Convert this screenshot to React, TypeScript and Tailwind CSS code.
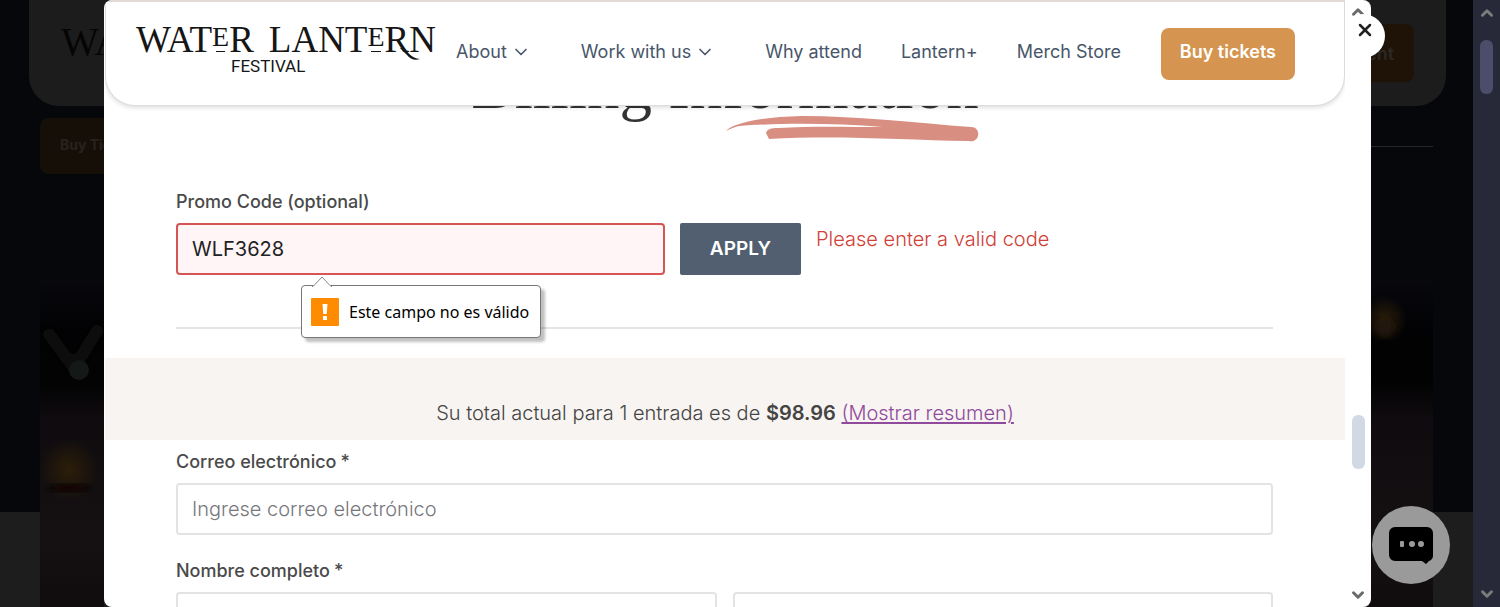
import { ChevronDown, ChevronUp, X } from "lucide-react";

interface NavItem {
	label: string;
	hasMenu?: boolean;
}

const NAV_ITEMS: NavItem[] = [
	{ label: "About", hasMenu: true },
	{ label: "Work with us", hasMenu: true },
	{ label: "Why attend" },
	{ label: "Lantern+" },
	{ label: "Merch Store" },
];

const labelClass = "block text-[18px] leading-6 font-medium text-[#4a4a4a]";
const inputClass =
	"block h-[52px] w-full rounded border-2 border-[#e3e3e5] bg-white px-[14px] text-[20px] text-[#222] outline-none placeholder:text-[#77777c] placeholder:font-light";

function Logo() {
	return (
		<a href="#home" className="mb-3 block w-[300px] shrink-0 text-[#161616]">
			<span className="relative flex items-start justify-between whitespace-nowrap font-['Liberation_Serif',serif] text-[37px] leading-9">
				<span className="flex items-start">
					WAT<SmallE />R
				</span>
				<span className="flex items-start">
					LANT<SmallE />RN
				</span>
				{/* Tail of the R, swung under the last letter */}
				<svg
					className="absolute right-[16px] top-[26px] h-[13px] w-[20px]"
					viewBox="0 0 20 13"
					fill="none"
				>
					<path
						d="M0 0h4c4 4 7 10 16 11-5 2-10 0-13-4z"
						fill="currentColor"
					/>
				</svg>
			</span>
			<span className="block pl-[95px] font-[Roboto,sans-serif] text-[17px] leading-4">
				FESTIVAL
			</span>
		</a>
	);
}

/** Raised E with a short bar underneath */
function SmallE() {
	return (
		<span className="relative inline-block text-[28px] leading-[30px]">
			E
			<span className="absolute inset-x-1 bottom-0 border-b border-current" />
		</span>
	);
}

/** Dimmed page that stays visible around the dialog */
function Backdrop() {
	return (
		<div className="absolute inset-0 flex flex-col bg-[#06070b]">
			<div className="mr-[27px] ml-[29px] flex h-[106px] shrink-0 items-start justify-between rounded-b-[30px] bg-[#1c1c1c] px-8 pt-6">
				<span className="font-['Liberation_Serif',serif] text-[40px] leading-9 text-[#050505]">
					WA
				</span>
				<span className="flex h-[58px] w-[134px] items-center justify-end rounded-lg bg-[#1f1308] pr-5 text-[18px] font-semibold text-[#2b2825]">
					Event
				</span>
			</div>
			<div className="mx-10 mt-3 flex shrink-0 items-center justify-between">
				<span className="flex h-14 w-[160px] items-center rounded-lg bg-[#160f08] px-5 pb-1 text-[14px] font-bold text-[#28221d]">
					Buy Tickets
				</span>
				<span className="h-px w-[200px] bg-[#27272a]" />
			</div>
			<div className="relative mt-[106px] flex-1">
				<div className="absolute inset-x-0 bottom-0 h-[95px] bg-[#1d1d1d]" />
				<svg
					className="absolute left-10 top-0 h-full w-16"
					viewBox="0 0 64 327"
					preserveAspectRatio="none"
				>
					<defs>
						<linearGradient id="water" x1="0" y1="0" x2="0" y2="1">
							<stop offset="0" stopColor="#08080d" />
							<stop offset="0.15" stopColor="#020204" />
							<stop offset="0.32" stopColor="#030304" />
							<stop offset="0.42" stopColor="#0f0b0e" />
							<stop offset="0.8" stopColor="#151113" />
							<stop offset="1" stopColor="#100b0c" />
						</linearGradient>
						<radialGradient id="glow">
							<stop offset="0" stopColor="#2c1e08" />
							<stop offset="1" stopColor="#2c1e08" stopOpacity="0" />
						</radialGradient>
						<filter id="soft">
							<feGaussianBlur stdDeviation="3" />
						</filter>
					</defs>
					<rect width="64" height="327" fill="url(#water)" />
					<path
						d="M6 50l28 38 26-42"
						stroke="#0c100f"
						strokeWidth="12"
						fill="none"
						filter="url(#soft)"
					/>
					<circle cx="39" cy="90" r="10" fill="#141816" />
					<ellipse cx="29" cy="190" rx="30" ry="32" fill="url(#glow)" />
					<ellipse cx="29" cy="208" rx="22" ry="4" fill="#080505" filter="url(#soft)" />
				</svg>
				<svg
					className="absolute right-10 top-0 h-full w-16"
					viewBox="0 0 64 327"
					preserveAspectRatio="none"
				>
					<rect width="64" height="327" fill="url(#water)" />
					<ellipse cx="16" cy="40" rx="22" ry="24" fill="url(#glow)" />
					<circle cx="16" cy="47" r="9" fill="#21170e" filter="url(#soft)" />
					<rect y="60" width="64" height="42" fill="#020202" />
				</svg>
			</div>
		</div>
	);
}

function SiteHeader() {
	return (
		<header className="relative z-10 flex h-[106px] items-center gap-5 rounded-b-[30px] border border-t-2 border-[#dcdcdc] border-t-[#e2d9d4] bg-white pl-[30px] shadow-[0_2px_4px_rgba(0,0,0,0.12)]">
			<Logo />
			<nav className="flex items-center gap-[39px] pb-1 whitespace-nowrap">
				{NAV_ITEMS.map((item) =>
					item.hasMenu ? (
						<button
							key={item.label}
							type="button"
							className="flex items-center gap-1 pr-[11px] text-[18px] leading-6 text-[#48566a]"
						>
							{item.label}
							<ChevronDown className="h-5 w-5" strokeWidth={2} />
						</button>
					) : (
						<a
							key={item.label}
							href="#"
							className="text-[18px] leading-6 text-[#48566a]"
						>
							{item.label}
						</a>
					)
				)}
			</nav>
			<button
				type="button"
				className="ml-5 h-[52px] w-[134px] shrink-0 rounded-lg bg-[#d59550] pb-1 text-[18px] font-semibold whitespace-nowrap text-white"
			>
				Buy tickets
			</button>
		</header>
	);
}

/** Browser style validation bubble, hangs under the field it belongs to */
function ValidationBubble({ text }: { text: string }) {
	return (
		<div
			role="alert"
			className="absolute left-[125px] top-[62px] z-10 flex h-[53px] w-[240px] items-center gap-[10px] rounded border border-[#767676] bg-white pl-[9px] shadow-[4px_4px_3px_rgba(0,0,0,0.25)]"
		>
			<svg
				className="absolute -top-[10px] left-[10px] h-[11px] w-[20px]"
				viewBox="0 0 20 11"
			>
				<path d="M0 11L10 1l10 10z" fill="#fff" />
				<path d="M0 10.500h1L10 1l9 9.500h1" fill="none" stroke="#888" />
			</svg>
			<svg className="h-7 w-7 shrink-0" viewBox="0 0 28 28">
				<rect width="28" height="28" rx="1" fill="#ff8c00" />
				<path d="M11.500 6h5l-.8 10h-3.400z" fill="#fff" />
				<rect x="12" y="18" width="4" height="4" fill="#fff" />
			</svg>
			<span className="font-['Noto_Sans',sans-serif] text-[16px] whitespace-nowrap text-black">
				{text}
			</span>
		</div>
	);
}

function BillingForm() {
	return (
		<main>
			<h1 className="-mt-[52px] text-center font-['Liberation_Serif',serif] text-[65px] leading-[64px] text-[#333]">
				Billing{" "}
				<span className="relative">
					Information
					<svg
						className="absolute -bottom-[22px] right-0 h-[30px] w-[254px]"
						viewBox="0 0 254 30"
					>
						<path
							d="M1 17C8 9 36 3 76 2c60 0 115 7 170 11 6 0 8 5 7 9-1 4-5 6-9 5-66-1-130-6-200-2l-3-6c1-4 5-5 12-5 32-2 70-1 105-1-50-4-105-4-144-1C9 13 5 15 1 17z"
							fill="#d98e82"
						/>
					</svg>
				</span>
			</h1>

			<form onSubmit={(e) => e.preventDefault()}>
				<div className="mt-[72px] pr-[72px] pl-[71px]">
					<label htmlFor="promo" className={labelClass}>
						Promo Code (optional)
					</label>
					<div className="mt-[9px] flex gap-[15px]">
						<div className="relative w-[489px]">
							<input
								id="promo"
								type="text"
								defaultValue="WLF3628"
								aria-invalid="true"
								className="block h-[52px] w-full rounded border-2 border-[#d65454] bg-[#fff5f6] px-[14px] text-[20px] text-[#222] outline-none"
							/>
							<ValidationBubble text="Este campo no es válido" />
						</div>
						<button
							type="button"
							className="h-[52px] w-[121px] shrink-0 rounded-xs bg-[#515f70] text-[19px] font-semibold text-white"
						>
							APPLY
						</button>
						<p className="pt-1 text-[20px] leading-6 font-light text-[#cf4036]">
							Please enter a valid code
						</p>
					</div>
					<hr className="mt-[52px] border-t-2 border-[#e4e4e4]" />
				</div>

				<p className="mt-[29px] bg-[#f8f4f1] pt-[43px] pb-[15px] text-center text-[20px] leading-6 font-light text-[#444]">
					Su total actual para 1 entrada es de{" "}
					<strong className="font-semibold">$98.96</strong>{" "}
					<a
						href="#resumen"
						className="text-[#8f4a9c] underline decoration-2 underline-offset-2"
					>
						(Mostrar resumen)
					</a>
				</p>

				<div className="pt-[10px] pr-[72px] pl-[71px]">
					<label htmlFor="email" className={labelClass}>
						Correo electrónico<span className="ml-1">*</span>
					</label>
					<input
						id="email"
						type="email"
						placeholder="Ingrese correo electrónico"
						className={`${inputClass} mt-[9px]`}
					/>
					<label htmlFor="first-name" className={`${labelClass} mt-6`}>
						Nombre completo<span className="ml-1">*</span>
					</label>
					<div className="mt-[9px] grid grid-cols-2 gap-4">
						<input id="first-name" type="text" className={inputClass} />
						<input
							type="text"
							aria-label="Apellido"
							className={inputClass}
						/>
					</div>
				</div>
			</form>
		</main>
	);
}

export default function App() {
	return (
		<div className="flex h-screen overflow-hidden bg-[#06070b] font-[Inter,sans-serif]">
			<div className="relative min-w-0 flex-1">
				<Backdrop />

				<div
					role="dialog"
					className="relative mr-[102px] ml-[104px] flex h-full rounded-lg bg-white pl-px"
				>
					<div className="h-full min-w-0 flex-1 overflow-hidden rounded-l-lg">
						<SiteHeader />
						<BillingForm />
					</div>
					<div className="flex w-[26px] flex-col items-center justify-between py-[3px] text-[#6b6b6b]">
						<ChevronUp className="h-[18px] w-[18px]" strokeWidth={4} />
						<div className="mt-[277px] h-[54px] w-[13px] rounded-md bg-[#d1dae4]" />
						<ChevronDown className="h-[18px] w-[18px]" strokeWidth={4} />
					</div>
					<button
						type="button"
						aria-label="Close"
						className="absolute top-[14px] -right-[14px] flex h-11 w-11 items-center justify-center rounded-full bg-white pb-3 pl-1 text-[#222]"
					>
						<X className="h-5 w-5" strokeWidth={3} />
					</button>
				</div>

				<button
					type="button"
					aria-label="Open chat"
					className="absolute right-[23px] bottom-[23px] flex h-[78px] w-[78px] items-center justify-center rounded-full bg-[#9a9a9a]"
				>
					<svg className="h-[38px] w-[44px]" viewBox="0 0 44 38">
						<path
							d="M6 1h32a6 6 0 0 1 6 6v22a6 6 0 0 1-4 6l-3 3-4-3H6a6 6 0 0 1-6-6V7a6 6 0 0 1 6-6z"
							fill="#000"
						/>
						<rect x="11" y="15" width="4" height="6" rx="1" fill="#9a9a9a" />
						<circle cx="23" cy="18" r="3" fill="#9a9a9a" />
						<circle cx="32" cy="18" r="3" fill="#9a9a9a" />
					</svg>
				</button>
			</div>

			{/* Scrollbar of the page behind */}
			<div className="flex w-[27px] flex-col items-center bg-[#272838] py-[4px] text-[#7c7c7c]">
				<ChevronUp className="h-[18px] w-[18px]" strokeWidth={4} />
				<div className="mt-[18px] h-[54px] w-[13px] rounded-md bg-[#4c4d6b]" />
				<ChevronDown className="mt-auto h-[18px] w-[18px]" strokeWidth={4} />
			</div>
		</div>
	);
}
